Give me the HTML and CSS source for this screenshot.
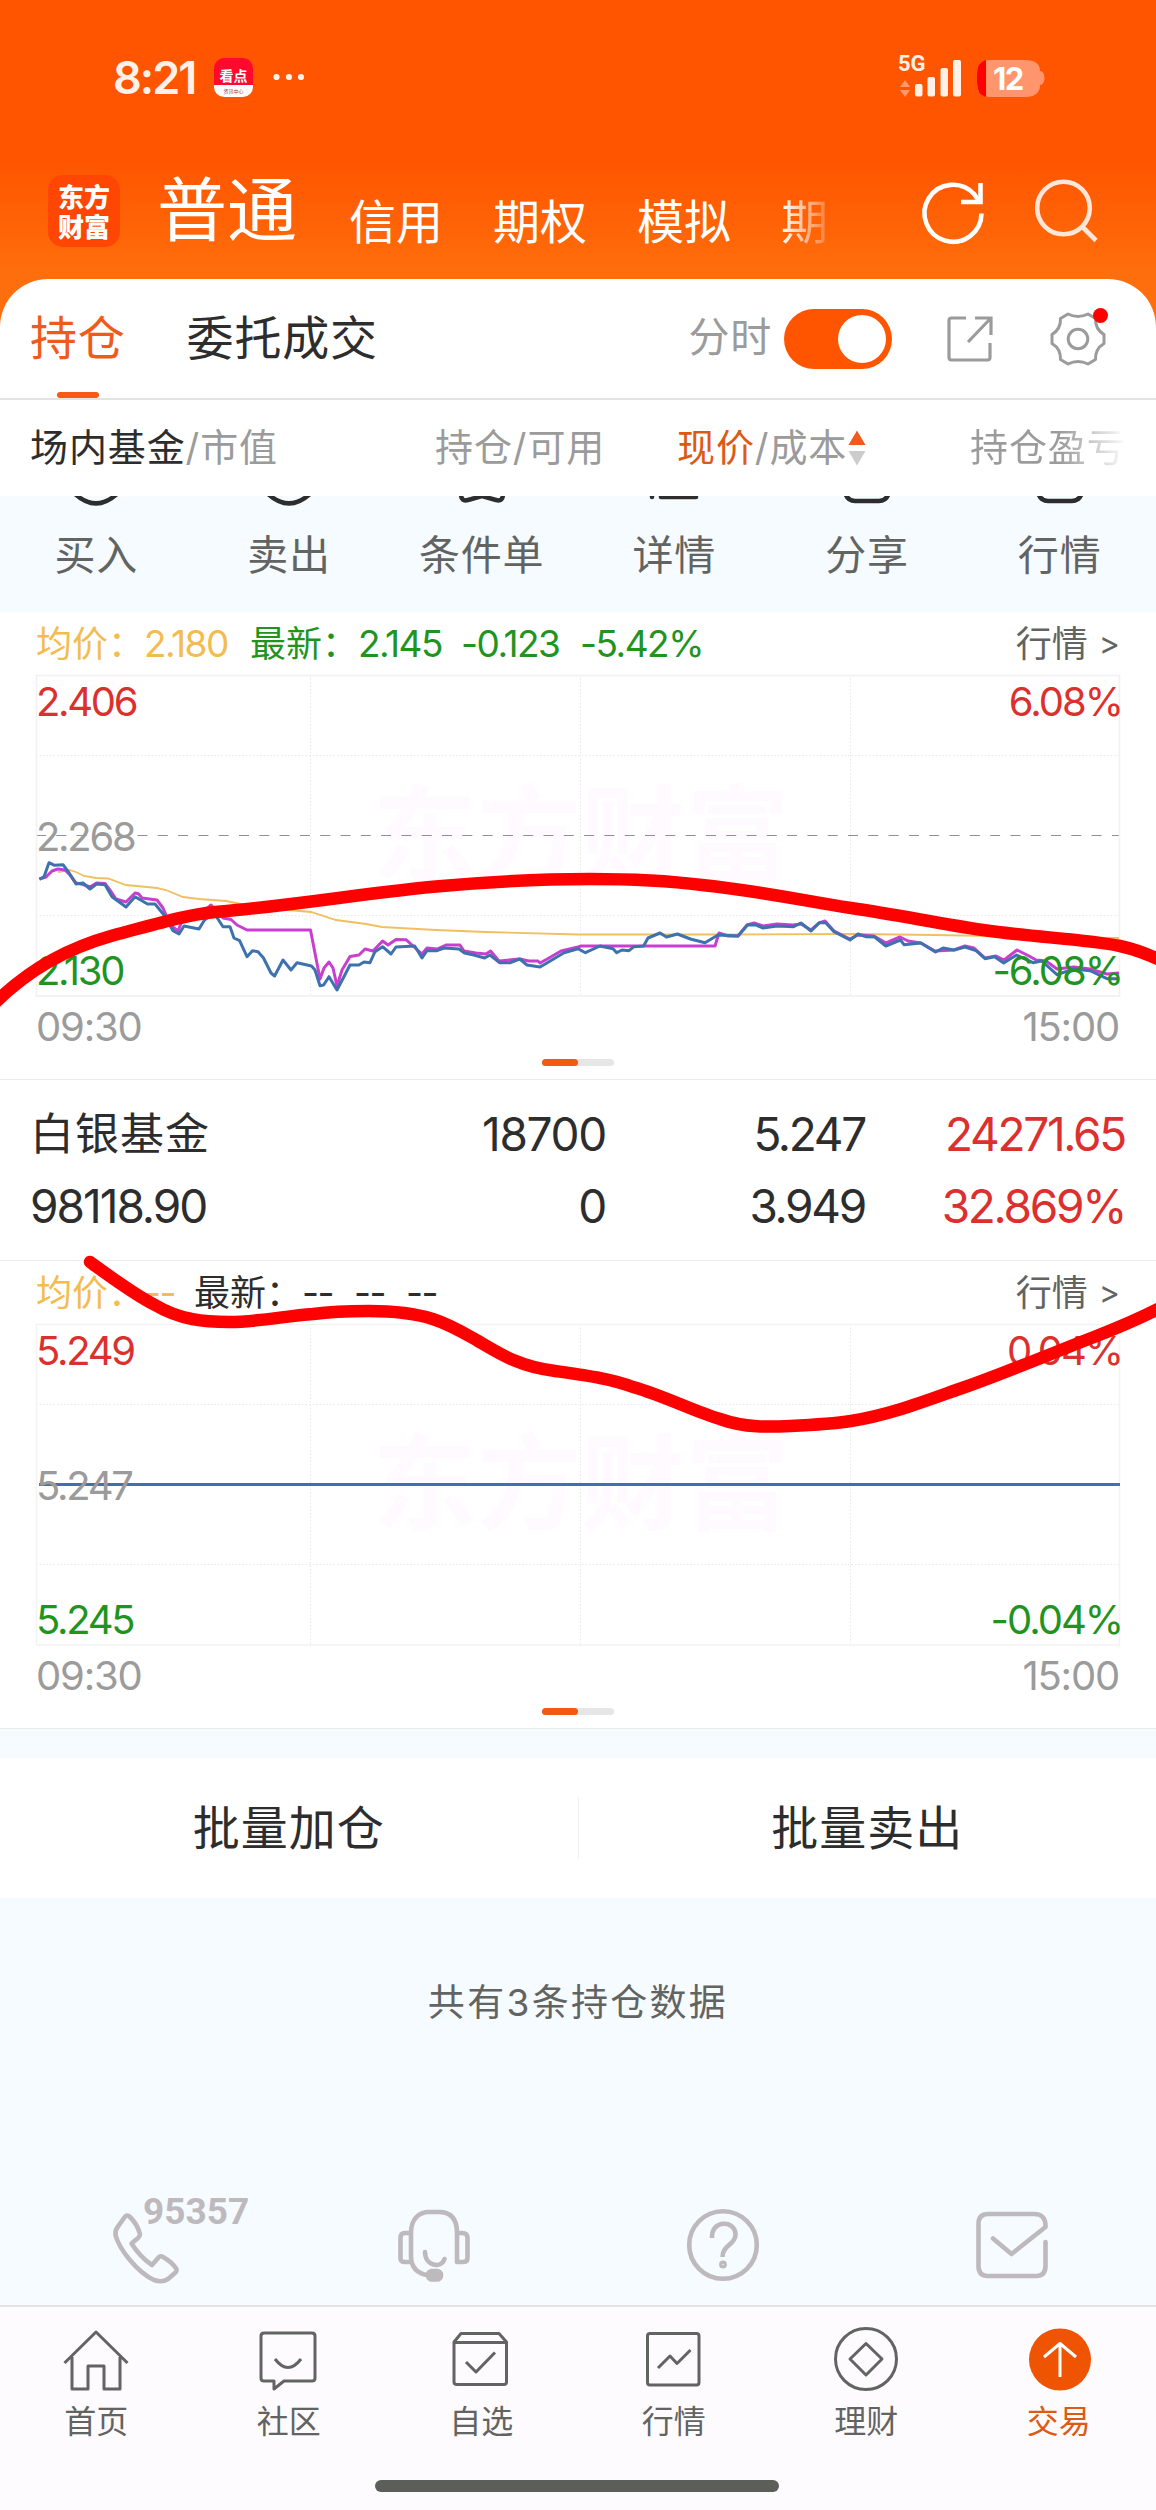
FILE: index.html
```html
<!DOCTYPE html>
<html lang="zh-CN">
<head>
<meta charset="utf-8">
<title>东方财富 - 持仓</title>
<link rel="stylesheet" href="styles.css">
</head>
<body>
<div class="phone">
  <header class="status">
    <span class="clock">8:21</span>
    <span class="app-badge"><b>看点</b><small>资讯中心</small></span>
    <svg class="dots" width="30" height="8" viewBox="0 0 30 8" fill="#fff0e8"><circle cx="3.500" cy="4" r="3.100"/><circle cx="16" cy="4" r="3.100"/><circle cx="28" cy="4" r="3.100"/></svg>
    <svg class="signal" width="150" height="46" viewBox="0 0 150 46">
      <text x="-1" y="18.500" class="net">5G</text>
      <path d="M1 35l5-7 5 7zM1 38l5 7 5-7z" fill="#ff9a70"/>
      <g fill="#fff0e8"><rect x="16" y="32" width="7.500" height="12.500" rx="2"/><rect x="28.500" y="25" width="7.500" height="19.500" rx="2"/><rect x="41.500" y="16" width="7.500" height="28.500" rx="2"/><rect x="54" y="8" width="8" height="36.500" rx="2"/></g>
      <path d="M90 8h38q13 1 13 11c6 0 6 14 0 14q0 11-13 12H90q-12-1-12-13V21q0-12 12-13z" fill="#ff956c"/>
      <path d="M87 8v37q-9-2-9-14v-9q0-12 9-14z" fill="#f00"/>
      <text x="94" y="37.500" class="level">12</text>
    </svg>
  </header>

  <div class="title-bar">
    <div class="logo"><span>东方</span><span>财富</span></div>
    <nav class="accounts"><b>普通</b><span>信用</span><span>期权</span><span>模拟</span><span class="cut">期</span></nav>
    <svg class="tool" width="66" height="66" viewBox="0 0 66 66" fill="none" stroke="#fff" stroke-width="4.600"><path d="M61.500 33.500A28.500 28.500 0 1 1 54 14l5 7"/><path d="M60.500 3v19H41"/></svg>
    <svg class="tool search" width="66" height="66" viewBox="0 0 66 66" fill="none" stroke="#ffe6d8" stroke-width="4.600"><circle cx="30.500" cy="29" r="26.300"/><path d="M49 47.500L63 61.500"/></svg>
  </div>

  <main class="sheet">
    <div class="tabs">
      <span class="tab active">持仓</span><span class="tab">委托成交</span>
      <span class="mode">分时</span><span class="toggle"></span>
      <svg class="share" width="48" height="48" viewBox="0 0 48 48" fill="none" stroke="#9b9b9b" stroke-width="3.200"><path d="M20 3H5.500Q3 3 3 5.500v37Q3 45 5.500 45h36q2.500 0 2.500-2.500V28M29 3h16v17M44 4L22 27"/></svg>
      <span class="gear"><svg width="56" height="56" viewBox="0 0 56 56" fill="none" stroke="#9b9b9b" stroke-width="3"><path d="M18 3Q28 8 38 3L45.500 7.500Q45 18 54 23.500V32.500Q45 38 45.500 48.500L38 53Q28 48 18 53L10.500 48.500Q11 38 2 32.500V23.500Q11 18 10.500 7.500Z" stroke-linejoin="round"/><circle cx="28" cy="28" r="9.800"/></svg><i></i></span>
    </div>

    <div class="columns">
      <span class="c1"><b>场内基金</b>/市值</span>
      <span class="c2">持仓/可用</span>
      <span class="c3"><em>现价</em>/成本<svg width="18" height="36" viewBox="0 0 18 36"><path d="M0.500 15L9 0.500 17.500 15z" fill="#f4581c"/><path d="M0.500 21L9 35.500 17.500 21z" fill="#ccc"/></svg></span>
      <span class="c4">持仓盈亏</span>
    </div>

    <div class="actions">
      <div><svg width="60" height="12" viewBox="0 0 60 12"><path d="M7-4Q30 19 53-4"/></svg>买入</div>
      <div><svg width="60" height="12" viewBox="0 0 60 12"><path d="M7-4Q30 19 53-4"/></svg>卖出</div>
      <div><svg width="60" height="12" viewBox="0 0 60 12"><path d="M9-2q0 8 7 6L30 0l14 4q7 2 7-6"/></svg>条件单</div>
      <div><svg width="60" height="12" viewBox="0 0 60 12"><path d="M8-2v3M17 1h35" stroke-linecap="round"/></svg>详情</div>
      <div><svg width="60" height="12" viewBox="0 0 60 12"><path d="M8-4q2 9 10 9h24q8 0 10-9"/></svg>分享</div>
      <div><svg width="60" height="12" viewBox="0 0 60 12"><path d="M8-4q2 9 10 9h24q8 0 10-9"/></svg>行情</div>
    </div>

    <section class="quote">
      <div class="legend green"><span class="avg">均价：</span><span class="avg n a1">2.180</span><span>最新：</span><span class="n a2">2.145</span><span class="n a3">-0.123</span><span class="n">-5.42%</span><a>行情<u>&gt;</u></a></div>
      <div class="plot">
        <svg width="1084" height="322" viewBox="0 0 1084 322" fill="none">
          <text class="watermark" x="545" y="198">东方财富</text>
          <path class="grid" d="M0 80.500H1084M0 240.500H1084M274.500 0V321M544.500 0V321M814.500 0V321"/>
          <path d="M0 160.500H1084" stroke="#909090" stroke-dasharray="10 10.300" stroke-width="1.200"/>
          <rect x="0.500" y="0.500" width="1083" height="320.500" stroke="#f3eff2" stroke-width="1.600"/>
          <path class="mean" d="M22 197L33 195 40 197 48 201 60 203 72 203.500 90 210 121 213 130 215 147 222 163 224 190 226 205 229 240 234 275 237 300 245 330 249 346 252 400 255 450 257 542 259.500 690 259.500 820 259 900 260 1000 262 1083 263"/>
          <path class="lead" d="M3.400 204L10 202 16 196 22 194 29 195 34 200 40 208 47 209.500 54 212 60.500 208 69 208.500 76 218 80 224 90 227 99 218 102.500 218.700 106 223 121 225 127 233 133 247 137 252 142 256 146 246 168 236 175 230 187 243 195 244.500 201 250 211 255 274.500 255 284 304 288 293 293 287 297 293 301 311 306 295 314 281.500 323 280 329 274 337 276 346.600 266 352 270 360 264.500 370 264.700 376 270 386 279 391 273 401 274 410 270 424 270 428 276 440 278 450 279 454.600 276 463 286 483.700 284 493 286 502 286 504 288 513 283 525 276 542 272 545 271 679 271 683 258 692 261 702 261 711 250 718 248 727 251 741 249 757 250 765 249 775 255 783 248 789 246 798 256 814 264 822 260 838 261 850 268 864 262 872 266 885 268 899 276 918 275 929 271 938 273 949 283 960 281 968 285 981 275 993 281 1000 285 1010 286 1021 294 1038 292 1054 294 1071 299 1083 298"/>
          <path class="price" d="M3.400 204.300L8 201.700 13 187.700 18.500 190.300 27 189.700 33 197.700 40 209 47 208 54 214 60.500 209 69 209.700 76 221.700 90 232 99 221.700 111.500 229 119 229 128 240 137 255.700 143 259 148 251 163 254 168.500 245 178 238 187 251.700 194 251.700 198 263 203.600 265.700 211 281.700 216.500 275.700 222 276.700 227.500 283 235 298 238.600 301 247 285 255 295 261 287.700 275.500 291 279 295 284 310.700 287.600 310 293 301.700 301 315 310.500 296.700 314 290 323 290 328 287 334 287.700 339 276.700 346.600 271.700 355 279 360 272 378.700 271 386 283 391 275.700 401 275.700 408 273 423 274 428.500 278 437.700 280 448.700 283 454 280 463.500 287.700 474.500 287.700 483.700 284 491 290 504 292 513 286.700 528 277.700 542 273.700 549.400 277.700 564 271 577 273.700 580.700 277.700 586 275 593 275.700 598 271.700 607.600 271 612 263 624 258 630.500 262 641.500 259 654.400 264 669 267.700 682 260 702 261 711.500 250 719 249.700 727 253 741 251 757.600 251.700 765 248 775 256 783.400 247.700 789.700 247.700 798 256.700 814 265 822 259 829.500 261.700 838.700 262 849.800 271 864.500 265 868 269.700 884.800 268 899.500 277 907 273 918 275 929 272 940 275.700 949 283.700 958.500 281.700 967.700 288 980.600 280 997 287.700 1005.700 286 1021 299.700 1037.800 294 1054 295.700 1071 303.700 1083 303.700"/>
        </svg>
        <div class="scale"><span class="up">2.406</span><span class="mid">2.268</span><span class="down">2.130</span></div>
        <div class="scale right"><span class="up">6.08%</span><span class="down">-6.08%</span></div>
      </div>
      <div class="times"><span>09:30</span><span>15:00</span></div>
      <div class="pager"><i></i></div>
    </section>

    <div class="holding">
      <div class="h1"><span class="name">白银基金</span><span>98118.90</span></div>
      <div class="h2"><span>18700</span><span>0</span></div>
      <div class="h3"><span>5.247</span><span>3.949</span></div>
      <div class="h4"><span>24271.65</span><span>32.869%</span></div>
    </div>

    <section class="quote">
      <div class="legend"><span class="avg">均价：</span><span class="avg n b1">--</span><span>最新：</span><span class="n b2">--</span><span class="n b2">--</span><span class="n">--</span><a>行情<u>&gt;</u></a></div>
      <div class="plot">
        <svg width="1084" height="322" viewBox="0 0 1084 322" fill="none">
          <text class="watermark" x="545" y="198">东方财富</text>
          <path class="grid" d="M0 80.500H1084M0 240.500H1084M274.500 0V321M544.500 0V321M814.500 0V321"/>
          <rect x="0.500" y="0.500" width="1083" height="320.500" stroke="#f3f3f3" stroke-width="1.600"/>
          <path class="price" d="M3 160.500H1084"/>
        </svg>
        <div class="scale"><span class="up">5.249</span><span class="mid">5.247</span><span class="down">5.245</span></div>
        <div class="scale right"><span class="up">0.04%</span><span class="down">-0.04%</span></div>
      </div>
      <div class="times"><span>09:30</span><span>15:00</span></div>
      <div class="pager"><i></i></div>
    </section>

    <div class="batch"><span>批量加仓</span><i></i><span>批量卖出</span></div>
    <p class="total">共有<span>3</span>条持仓数据</p>

    <div class="service">
      <div><svg width="140" height="90" viewBox="0 0 140 90"><path d="M23 26Q26 21.500 29 25Q36 32 38.500 40.500Q40 43 37 46L30.500 51.500Q39 65 51 73L58 65Q60 63.500 62 65Q71 70 75.500 77Q76 79 75 80L67 87Q61 91 53 88C36 80 18 57 14.500 43Q14 38 17 34.500Z" transform="translate(0 -4)"/><text x="42" y="28">95357</text></svg></div>
      <div><svg width="74" height="74" viewBox="0 0 74 74"><path d="M14 54H7Q3.500 54 3.500 50V30Q3.500 25 8 25H14M60 25H65Q70.500 25 70.500 30V50Q70.500 54 66 54H60ZM60 25C60 9 52 4 42 4H32C22 4 14 11 14 25V48Q14 65 32 67.500"/><path d="M28 44C28 58 44 61 47.500 51" stroke-linecap="round"/><rect x="31" y="63" width="13" height="8.500" rx="4" fill="#bdb9bc"/></svg></div>
      <div><svg width="74" height="74" viewBox="0 0 74 74"><circle cx="37" cy="37" r="33.800"/><path d="M26 30C25 11 50 12 49.500 27C49 37 36.500 37 36.500 49"/><circle cx="37" cy="56.500" r="1.600"/></svg></div>
      <div><svg width="74" height="74" viewBox="0 0 74 74"><path d="M70.500 34V58Q70.500 68 61 68H13Q3.500 68 3.500 58V16Q3.500 6 13 6H59Q71 6 70.500 19L36.500 46L18 30.500" stroke-linecap="round"/></svg></div>
    </div>

    <nav class="bottom">
      <div><svg width="70" height="70" viewBox="0 0 70 70"><path d="M3.500 40L35 9 66.500 40M11 34V66H27V43H43V66H59V34"/></svg>首页</div>
      <div><svg width="70" height="70" viewBox="0 0 70 70"><path d="M10 10H58Q61 10 61 13V55Q61 58 58 58H30L20 66V58H10Q7 58 7 55V13Q7 10 10 10ZM21 36Q34 53 47 36"/></svg>社区</div>
      <div><svg width="70" height="70" viewBox="0 0 70 70"><path d="M8 19L15 10.500H53L60.500 19V59Q60.500 61.500 58 61.500H11Q8 61.500 8 59ZM8 19.500H60.500M20 39L30 49 49 29.500"/></svg>自选</div>
      <div><svg width="70" height="70" viewBox="0 0 70 70"><rect x="8.500" y="10.500" width="51.500" height="51.500" rx="2.500"/><path d="M19 45L31 33 38 40.500 51.500 27"/></svg>行情</div>
      <div><svg width="70" height="70" viewBox="0 0 70 70"><circle cx="35" cy="36" r="30.500"/><path d="M35 20.500L51 36 35 52 19 36Z" stroke-linejoin="round"/></svg>理财</div>
      <div class="on"><svg width="70" height="70" viewBox="0 0 70 70"><circle cx="36" cy="36.500" r="31" fill="#ef5403" stroke="none"/><path d="M36 54V21M20 34L36 20.500 52 34" stroke="#fff"/></svg>交易</div>
    </nav>
    <div class="home"><i></i></div>
  </main>

  <svg class="marker" width="1156" height="2510" viewBox="0 0 1156 2510">
    <path d="M-5 1003C30 968 72 947 111 936C160 923 185 915 215 912C300 905 370 892 442 886C500 881 540 879 590 879C640 879 670 881 702 885C760 891 800 900 851 908C900 915 940 924 983 930C1030 937 1085 939 1120 946C1138 950 1150 955 1164 962"/>
    <path d="M90 1262C112 1278 135 1295 155 1305C180 1320 205 1322 229 1322C258 1322 285 1316 313 1314C335 1311 350 1311 369 1311C430 1311 450 1325 478 1341C500 1354 520 1367 555 1371C590 1376 612 1379 633 1387C665 1396 695 1412 720 1419C745 1428 770 1427 790 1426C812 1425 832 1424 851 1421C890 1415 925 1401 965 1387C1000 1375 1060 1350 1094 1337C1115 1329 1135 1321 1164 1306"/>
  </svg>
</div>
</body>
</html>
```
FILE: styles.css
```css
* { box-sizing: border-box; }
body { margin: 0; font-family: Inter, "Noto Sans CJK SC", sans-serif; color: #2d2d2d; background: #ff5500; }
svg { display: block; overflow: visible; flex: none; }
b, em, i, u, small { font-weight: 400; font-style: normal; text-decoration: none; }
span, a, b { white-space: nowrap; }
.phone { position: relative; width: 1156px; height: 2510px; overflow: hidden; background: linear-gradient(#ff5500 0, #ff5500 160px, #ff6e0c 275px, #ff6e0c 100%); }

.status { display: flex; align-items: center; height: 154px; padding: 0 110px 0 113px; }
.clock { width: 101px; font: 600 45px/1 Inter, sans-serif; letter-spacing: -2px; color: #fff0e8; }
.app-badge { display: flex; flex-direction: column; align-items: center; width: 39px; height: 39px; padding-top: 7px; border-radius: 10px; color: #fff; background: linear-gradient(#ff0a2c 0 70%, #fff 70%); font-family: "Noto Sans CJK SC", sans-serif; }
.app-badge b { font-weight: 700; font-size: 14px; line-height: 20px; }
.app-badge small { font-size: 5px; line-height: 12px; color: #a33; }
.dots { margin-left: 20px; }
.signal { margin: -4px -3px 0 auto; }
.net { font: 700 22px Roboto, sans-serif; fill: #fff0e8; }
.level { font: 700 31px Inter, sans-serif; letter-spacing: -1.500px; fill: #fff; }

.title-bar { display: flex; align-items: flex-start; height: 125px; padding: 21px 51px 0 48px; }
.logo { width: 72px; height: 72px; border-radius: 15px; background: #ff4603; color: #fff; display: flex; flex-direction: column; justify-content: center; align-items: center; font: 900 26px/30px "Noto Sans CJK SC", sans-serif; }
.accounts { display: flex; align-items: baseline; margin: -11px 0 0 37px; width: 763px; color: #fff; font-size: 47px; line-height: 100px; gap: 50px; }
.accounts b { position: relative; top: -3px; font-size: 70px; margin-right: 2px; }
.accounts .cut { background: linear-gradient(90deg, #fff, #ff8a48 90%); -webkit-background-clip: text; background-clip: text; color: transparent; }
.tool { margin-top: 5px; }
.search { margin: 4px 0 0 47px; }

.sheet { height: 2231px; background: #fff; border-radius: 48px 48px 0 0; }
.tabs { display: flex; align-items: center; height: 121px; padding: 0 50px 0 30px; border-bottom: 2px solid #e3e3e3; font-size: 47px; letter-spacing: .8px; }
.tab { position: relative; line-height: 119px; margin-right: 61px; top: -1px; }
.tab.active { color: #f05a1a; }
.tab.active::after { content: ""; position: absolute; left: 27px; bottom: -1px; width: 42px; height: 6px; border-radius: 3px; background: #f65a14; }
.mode { margin-left: auto; color: #9b9b9b; font-size: 41px; line-height: 110px; margin-top: -3px; }
.toggle { width: 108px; height: 60px; margin-left: 12px; border-radius: 30px; background: #ff5500; display: flex; justify-content: flex-end; padding: 6px; }
.toggle::after { content: ""; width: 48px; height: 48px; border-radius: 50%; background: #fff; }
.share { margin-left: 54px; }
.gear { position: relative; margin-left: 56px; }
.gear i { position: absolute; right: -2px; top: -3px; width: 15px; height: 15px; border-radius: 50%; background: #f00; }

.columns { display: grid; grid-template-columns: 30px 405px 242px 293px 1fr; height: 96px; line-height: 95px; font-size: 38px; letter-spacing: .9px; color: #9b9b9b; }
.c1 { grid-column: 2; }
.c1 b { color: #2d2d2d; }
.c3 { display: flex; }
.c3 em { color: #dc5a14; }
.c3 svg { margin: 30px 0 0 1px; }
.c4 { background: linear-gradient(90deg, #9b9b9b 90px, #fff 158px); -webkit-background-clip: text; background-clip: text; color: transparent; }

.actions { display: grid; grid-template-columns: repeat(6, 1fr); height: 116px; overflow: hidden; background: #f6fbff; color: #626462; font-size: 41px; letter-spacing: .8px; line-height: 60px; text-align: center; }
.actions svg { margin: 0 auto 17px; fill: none; stroke: #2d2d2d; stroke-width: 4.500; overflow: hidden; }

.quote { height: 468px; padding: 0 36px; border-bottom: 1px solid #ebebeb; background: #fff; }
.legend { display: flex; height: 63px; font-size: 36px; line-height: 64px; }
.n { font-size: 37px; letter-spacing: -1.500px; }
.legend .avg { color: #f3bc50; }
.green { color: #1f941f; }
.a1, .a2, .a3, .b1, .b2 { flex: none; }
.a1 { width: 106px; }
.a2 { width: 103px; }
.a3 { width: 119px; }
.b1 { width: 50px; }
.b2 { width: 52px; }
.legend a { display: flex; margin-left: auto; color: #626462; }
.legend u { margin-left: 11px; font-size: 32px; }
.plot { position: relative; height: 322px; }
.watermark { font: 700 104px "Noto Sans CJK SC", sans-serif; text-anchor: middle; fill: #fefaff; }
.grid { stroke: #e8e8e8; stroke-dasharray: 1.500 2; }
.mean { stroke: #f0bf60; stroke-width: 1.800; }
.lead { stroke: #c83fd0; stroke-width: 3; stroke-linejoin: round; }
.price { stroke: #3d72ae; stroke-width: 3; stroke-linejoin: round; }
.scale { position: absolute; left: 0; top: 2px; bottom: 1px; display: flex; flex-direction: column; justify-content: space-between; font-size: 40px; line-height: 50px; letter-spacing: -2.300px; }
.scale.right { left: auto; right: -2px; text-align: right; letter-spacing: -2px; }
.up { color: #dc302e; }
.mid { color: #9b9b9b; }
.down { color: #1f941f; }
.times { display: flex; justify-content: space-between; padding: 5px 1px 0 0; font-size: 40px; line-height: 50px; letter-spacing: -1.200px; color: #9b9b9b; }
.pager { width: 72px; height: 7px; margin: 7px auto 0; border-radius: 4px; background: #e6e6e6; }
.pager i { display: block; width: 36px; height: 7px; border-radius: 4px; background: #f25a12; }

.holding { display: grid; grid-template-columns: 30px 302px 274px 259px 260px; height: 181px; padding-top: 18px; border-bottom: 1px solid #ebebeb; font-size: 46px; line-height: 72px; letter-spacing: -2.300px; }
.holding div { display: flex; flex-direction: column; text-align: right; }
.holding .h1 { grid-column: 2; text-align: left; letter-spacing: -2px; }
.holding .name { font-size: 44px; letter-spacing: 1px; }
.holding .h2 { letter-spacing: -1.300px; }
.holding .h4 { color: #dc302e; }

.batch { display: flex; align-items: center; justify-content: space-between; height: 169px; border-top: 29px solid #f6fbff; background: #fff; font-size: 47px; letter-spacing: 1px; }
.batch span { flex: 1; text-align: center; margin-top: -8px; }
.batch i { width: 1px; height: 62px; background: #f0f0f0; }
.total { margin: 0; height: 292px; padding-top: 75px; background: #f6fbff; text-align: center; color: #626462; font-size: 37px; line-height: 60px; letter-spacing: 2.300px; }
.service { display: grid; grid-template-columns: repeat(4, 1fr); height: 115px; padding-top: 18px; background: #f6fbff; }
.service svg { margin: 0 auto; fill: none; stroke: #bdb9bc; stroke-width: 4.600; stroke-linejoin: round; }
.service div:first-child svg { margin-top: -12px; margin-left: 101px; }
.service text { font: 700 37px Roboto, sans-serif; fill: #bdb9bc; stroke: none; }
.bottom { display: grid; grid-template-columns: repeat(6, 1fr); height: 150px; padding: 16px 1px 0 0; border-top: 2px solid #e5e2e6; background: #fefbff; color: #626462; font-size: 32px; line-height: 40px; text-align: center; }
.bottom svg { margin: 0 auto 9px; fill: none; stroke: #626462; stroke-width: 3; stroke-linejoin: round; }
.bottom .on { color: #dc5a14; }
.home { height: 60px; padding: 25px 2px 0 0; background: #fefbff; }
.home i { display: block; width: 404px; height: 12px; margin: 0 auto; border-radius: 6px; background: #5c5e5a; }

.marker { position: absolute; left: 0; top: 0; pointer-events: none; }
.marker path { fill: none; stroke: #f00; stroke-width: 12.500; stroke-linecap: round; }
```
